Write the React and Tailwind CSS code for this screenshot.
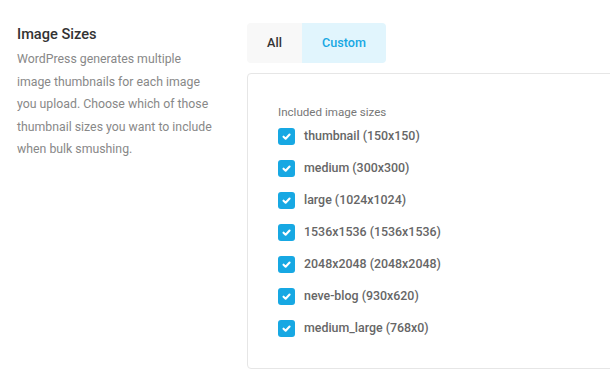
import React from 'react';

const sizes = [
  'thumbnail (150x150)',
  'medium (300x300)',
  'large (1024x1024)',
  '1536x1536 (1536x1536)',
  '2048x2048 (2048x2048)',
  'neve-blog (930x620)',
  'medium_large (768x0)',
];

const Check = () => (
  <span className="flex h-[17px] w-[17px] items-center justify-center rounded-[3px] bg-[#17a8e3]">
    <svg width="11" height="11" viewBox="0 0 10 10" fill="none">
      <path d="M2.3 5.2 L4.2 7 L7.8 3.2" stroke="#fff" strokeWidth="1.9" strokeLinecap="round" strokeLinejoin="round" />
    </svg>
  </span>
);

export default function App() {
  return (
    <div className="flex h-[382px] w-[610px] overflow-hidden bg-white pl-[17px] pt-[23px]" style={{ fontFamily: 'Roboto, "Liberation Sans", sans-serif' }}>
      <div className="w-[218px] shrink-0 pt-[1px]">
        <h3 className="text-[14.6px] font-medium leading-[20px] text-[#333]">Image Sizes</h3>
        <p className="mt-[4px] w-[199px] text-[12.3px] leading-[22.6px] text-[#888]">
          WordPress generates multiple image thumbnails for each image you upload. Choose which of those thumbnail sizes you want to include when bulk smushing.
        </p>
      </div>
      <div className="ml-[12px] flex flex-col">
        <div className="flex h-10 w-[139px] overflow-hidden rounded-[4px] text-[12.6px] font-medium">
          <div className="flex w-[55px] items-center justify-center bg-[#f8f8f8] text-[#333]">All</div>
          <div className="flex flex-1 items-center justify-center bg-[#e1f5fd] text-[#17a8e3]">Custom</div>
        </div>
        <div className="mt-[10px] h-[296px] w-[380px] rounded-[4px] border border-[#e6e6e6] pl-[30px] pt-[30px]">
          <div className="text-[11.6px] leading-[16px] text-[#777]">Included image sizes</div>
          <div className="flex flex-col">
            {sizes.map((s) => (
              <div key={s} className="flex h-[32px] items-center gap-[9px]">
                <Check />
                <span className="text-[12.4px] font-medium text-[#666]">{s}</span>
              </div>
            ))}
          </div>
        </div>
      </div>
    </div>
  );
}
